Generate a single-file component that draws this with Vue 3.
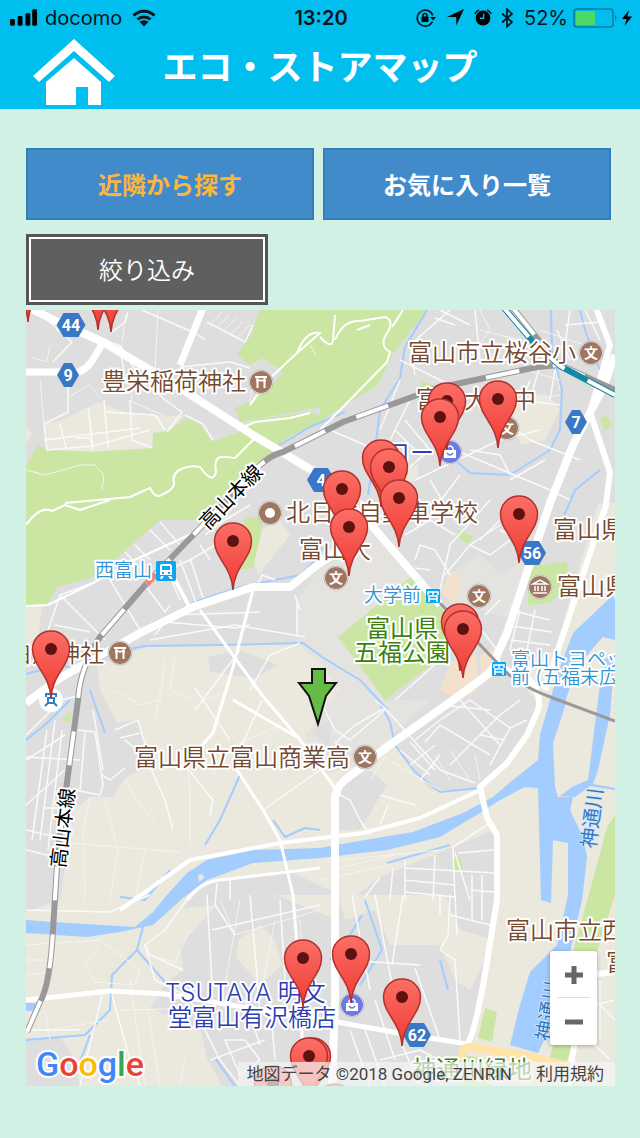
<template>
  <div class="page">
    <header class="header">
      <div class="status">
        <div class="status-side">
          <svg class="signal" viewBox="0 0 29 17" aria-hidden="true">
            <rect x="0" y="10" width="5" height="7" rx="1.5" />
            <rect x="8" y="7" width="5" height="10" rx="1.5" />
            <rect x="16" y="4" width="5" height="13" rx="1.5" />
            <rect x="23" y="0" width="5" height="17" rx="1.5" />
          </svg>
          <span>docomo</span>
          <svg class="wifi" viewBox="0 0 24 18" aria-hidden="true">
            <path d="M1.5 6.5 A15 15 0 0 1 22.5 6.5" />
            <path d="M5.5 10.5 A9.5 9.5 0 0 1 18.5 10.5" />
            <path class="solid" d="M12 17.5 L7.6 13 A6.2 6.2 0 0 1 16.4 13Z" />
          </svg>
        </div>
        <strong class="clock">13:20</strong>
        <div class="status-side right">
          <svg class="lock" viewBox="0 0 20 18" aria-hidden="true">
            <path class="line" d="M16.5 12.5 A8 8 0 1 1 16.8 6.5" />
            <path d="M14 8 H20 L17.2 11.5Z" />
            <rect x="5.5" y="7.5" width="7" height="5.5" rx="0.8" />
            <path class="line" d="M7 8 V6.5 A2 2 0 0 1 11 6.5 V8" />
          </svg>
          <svg class="arrow" viewBox="0 0 17 17" aria-hidden="true">
            <path d="M17 0 L9.3 16.5 V8 H0Z" />
          </svg>
          <svg class="alarm" viewBox="0 0 18 17" aria-hidden="true">
            <circle cx="9" cy="9" r="7.4" />
            <path d="M0.8 5 A9 9 0 0 1 5 0.9 M13 0.9 A9 9 0 0 1 17.2 5" class="line" />
            <path d="M9.6 4.8 V9.2 H5.8" class="hands" />
          </svg>
          <svg class="bluetooth" viewBox="0 0 12 20" aria-hidden="true">
            <path d="M1 5.5 L11 14 L6 18.8 V1.2 L11 6 L1 14.5" />
          </svg>
          <span>52%</span>
          <svg class="battery" viewBox="0 0 46 20" aria-hidden="true">
            <rect class="case" x="1" y="1" width="39" height="18" rx="3" />
            <rect class="level" x="3" y="3" width="19" height="14" rx="1" />
            <path class="cap" d="M42 7 Q45 10 42 13Z" />
          </svg>
          <svg class="bolt" viewBox="0 0 10 16" aria-hidden="true">
            <path d="M7 0 L0 9 H4.5 L2.6 16 L10 6.5 H5.4Z" />
          </svg>
        </div>
      </div>
      <div class="title-bar">
        <a href="#" class="home" aria-label="ホーム">
          <svg viewBox="0 0 82 66" aria-hidden="true">
            <path d="M41 0 L82 37 L76 43 L41 12 L6 43 L0 37Z" />
            <path d="M41 19 L68 43 V66 H55 V48 H43 V66 H13 V43Z" />
          </svg>
        </a>
        <h1>エコ・ストアマップ</h1>
      </div>
    </header>

    <main class="content">
      <div class="tabs">
        <button type="button" class="tab active">近隣から探す</button>
        <button type="button" class="tab">お気に入り一覧</button>
      </div>
      <button type="button" class="filter">絞り込み</button>

      <div class="map">
        <svg class="map-canvas" viewBox="26 310 589 776" role="img" aria-label="地図">
          <defs>
            <linearGradient id="pin-fill" x1="0" y1="0" x2="0" y2="1">
              <stop offset="0" stop-color="#fb6f66" />
              <stop offset="1" stop-color="#ef3a33" />
            </linearGradient>
            <path id="pin" d="M0 0 C-1.5 -24 -18.5 -32 -18.5 -49 A18.5 18 0 0 1 18.5 -49 C18.5 -32 1.5 -24 0 0Z" />
          </defs>

          <rect x="26" y="310" width="589" height="776" fill="#dedede" />
          <path v-for="(area, i) in areas" :key="'area' + i" :d="area.d" :class="area.kind" />
          <path v-for="(d, i) in streams" :key="'stream' + i" :d="d" class="stream" />
          <path v-for="(d, i) in lanes" :key="'lane' + i" :d="d" class="lane" />
          <path v-for="(d, i) in streets" :key="'street' + i" :d="d" class="street" />
          <path v-for="(road, i) in roads" :key="'road' + i" :d="road.d" class="road" :stroke-width="road.w" />
          <path class="toll" d="M462 1060 Q461 1047 469 1047 L520 1055 L570 1066" />

          <!-- railways -->
          <g v-for="(d, i) in rails" :key="'rail' + i">
            <path :d="d" class="rail" />
            <path :d="d" class="rail-dash" />
          </g>
          <path class="tram" d="M440 603 L507 673 Q525 688 553 698 L615 721" />
          <path class="bullet" d="M504 308 L533 342 L560 366 L615 395" />
          <path class="bullet-inner" d="M504 308 L533 342 L560 366 L615 395" />
          <path class="platform" d="M147 584 L156 574" />

          <g v-for="(b, i) in badges" :key="'badge' + i" :transform="`translate(${b.x} ${b.y})`">
            <path class="badge" :d="hexagon(b.w)" />
            <text class="badge-text" y="6">{{ b.text }}</text>
          </g>

          <text
            v-for="(l, i) in labels"
            :key="'label' + i"
            class="label"
            :class="l.kind"
            :x="l.x"
            :y="l.y"
            v-text="l.text"
          />
          <text
            v-for="(l, i) in tilted"
            :key="'tilted' + i"
            class="label small middle"
            :class="l.kind"
            :transform="`translate(${l.x} ${l.y}) rotate(${l.angle})`"
            y="7"
            v-text="l.text"
          />

          <g v-for="(p, i) in places" :key="'place' + i" :transform="`translate(${p.x} ${p.y})`">
            <circle class="place-ring" r="12" />
            <circle r="11" :fill="p.icon === 'bag' ? '#6c7be0' : '#9f7761'" />
            <text v-if="p.icon === 'school'" class="place-text" y="5">文</text>
            <path v-else-if="p.icon === 'torii'" class="place-line" d="M-6 -5 H6 M-5 -1.5 H5 M-3.5 -5 V6 M3.5 -5 V6" />
            <circle v-else-if="p.icon === 'dot'" r="5" fill="#fff" />
            <path v-else-if="p.icon === 'museum'" class="place-line thin" d="M-7 -3 L0 -7 L7 -3Z M-5 -1 V4 M-2 -1 V4 M2 -1 V4 M5 -1 V4 M-7 6 H7" />
            <g v-else>
              <path fill="#fff" d="M-6 -2 H6 V6 H-6Z" />
              <path class="place-line thin" d="M-3 -2 V-4 Q0 -8 3 -4 V-2" />
              <path fill="none" stroke="#6c7be0" stroke-width="1.5" d="M-3 1 Q0 5 3 1" />
            </g>
          </g>

          <!-- stations -->
          <g transform="translate(156 561)">
            <rect width="20" height="20" rx="2" fill="#0aa5f5" />
            <path fill="#fff" d="M6 3 H14 Q16 3 16 5 V14 H4 V5 Q4 3 6 3Z M5 15 H8 L6 18 H4Z M12 15 H15 L17 18 H14Z" />
            <path fill="#0aa5f5" d="M6 5 H14 V9 H6Z M6 11 H8 V13 H6Z M12 11 H14 V13 H12Z" />
          </g>
          <g v-for="(s, i) in tramStops" :key="'stop' + i" :transform="`translate(${s.x} ${s.y})`">
            <rect x="-7" y="-7" width="14" height="14" rx="1" fill="#0aa5f5" />
            <path fill="none" stroke="#fff" stroke-width="1.5" d="M-5 -1 V-4 H5 V-1 M0 -4 V-1 M-4 3 V0 H4 V3Z M-4 3 V6 M4 3 V6" />
          </g>
          <circle cx="51" cy="700" r="12" fill="#fff" />
          <path fill="none" stroke="#2f7fc9" stroke-width="2" d="M46 697 V694 H56 V697 M48 703 V698 H54 V703Z M45 706 L48 703 M57 706 L54 703" />

          <g v-for="(p, i) in pins" :key="'pin' + i" :transform="`translate(${p[0]} ${p[1]})`">
            <use href="#pin" class="pin" />
            <circle cy="-49" r="6" fill="#5d1210" />
          </g>
          <path class="here" d="M312 669 H325 V683 H336 L326 696 L318 724 L309 696 L299 683 H312Z" />
          <text class="google" x="36" y="1076"><tspan class="g-blue">G</tspan><tspan class="g-red">o</tspan><tspan class="g-yellow">o</tspan><tspan class="g-blue">g</tspan><tspan class="g-green">l</tspan><tspan class="g-red">e</tspan></text>
        </svg>

        <div class="zoom">
          <button type="button" aria-label="拡大" @click="zoom++">
            <svg viewBox="0 0 18 18"><path d="M0 9 H18 M9 0 V18" /></svg>
          </button>
          <button type="button" aria-label="縮小" @click="zoom--">
            <svg viewBox="0 0 18 18"><path d="M0 9 H18" /></svg>
          </button>
        </div>
        <div class="credit">
          <span>地図データ ©2018 Google, ZENRIN</span>
          <a href="#">利用規約</a>
        </div>
      </div>
    </main>
  </div>
</template>

<script setup>
import { ref } from 'vue'

const zoom = ref(14)

function hexagon(w) {
  const h = w / 2
  return `M${-h} 0 L${7 - h} -12 H${h - 7} L${h} 0 L${h - 7} 12 H${7 - h}Z`
}

const areas = [
  // farmland
  { kind: 'land', d: 'M100 690 L97 664 L147 647 L303 643 L340 660 L380 700 L400 752 L430 790 L480 790 L507 765 L530 735 L541 705 L507 670 L555 650 L598 503 H615 V1086 H460 L487 962 L500 900 L494 830 L453 847 L380 877 L350 900 L287 870 L207 883 L183 908 L217 905 L180 945 L183 970 L165 985 L150 1008 L200 1028 L207 1058 L222 1086 H80 L70 1050 L60 1038 L26 1038 V912 L60 900 L73 810 L90 797 L113 797 L123 780 L150 762 L137 720 L117 723Z' },
  { kind: 'land', d: 'M44 424 L62 420 L98 402 L125 412 L165 416 L185 415 L170 430 L153 433 L152 448 L93 452 L47 450Z M26 425 L32 433 L26 445Z M26 607 L42 606 L38 640 L50 660 L26 668Z' },
  { kind: 'land', d: 'M238 940 L260 925 L275 940 L282 965 L260 985 L236 957Z M275 895 H337 V920 L300 905Z M338 895 L445 895 L460 930 L495 940 L470 990 L455 980 L440 945 L390 945 L375 910 L345 920Z' },
  { kind: 'land', d: 'M262 530 L280 520 L290 535 L258 575 L254 560Z M510 402 L545 393 L560 410 L545 440 L520 445Z M398 465 L418 465 L418 480 L400 485Z' },
  { kind: 'campus', d: 'M297 600 L320 568 L338 560 L370 530 L413 577 L338 637 L385 700 H430 L360 765 L325 775 L305 735 L340 690 L322 665 L297 643Z M447 575 L480 555 L500 575 L525 560 L515 620 L450 602Z' },
  { kind: 'urban', d: 'M208 657 L240 650 L278 665 L255 678 L210 672Z M310 730 L330 722 L330 750Z M340 783 L370 770 L387 785 L360 830 H338Z M26 655 L95 675 L78 730 L26 800Z' },
  { kind: 'peach', d: 'M440 592 L452 571 L462 580 L454 605Z M440 690 L450 662 L476 655 L478 690 L460 700Z M480 655 L498 648 L496 675 L482 680Z' },
  // woods and parks
  { kind: 'green', d: 'M259 310 L252 333 L237 355 L250 365 L262 358 L283 372 L273 385 L250 402 L235 408 L240 422 L320 407 V422 L345 405 L378 385 L392 355 L427 310Z' },
  { kind: 'green', d: 'M26 467 L37 445 L47 450 L93 452 L153 448 L153 433 L167 432 L187 418 L200 424 L212 442 L237 433 L253 420 L310 412 L327 418 L287 438 L257 468 L213 505 L200 520 L160 520 L137 540 L107 567 L90 578 L57 587 L47 605 L26 607Z' },
  { kind: 'green', d: 'M245 518 L265 515 L253 568 L238 570Z M338 637 L413 575 L445 613 L450 650 L385 700Z M527 565 L567 562 L570 583 L550 603 L528 605Z M458 530 L473 536 L468 544 L458 538Z M422 381 L433 385 L430 391 L420 390Z M600 420 L604 414 L613 425 L605 431Z M61 720 L71 712 L70 722Z' },
  { kind: 'green', d: 'M607 827 L615 815 V895 L597 952 L573 952 L590 890Z M485 1008 L497 1012 L492 1042 L478 1038Z M553 1045 H572 L568 1062 L550 1058Z M463 1055 L483 1058 L493 1086 H460Z M453 858 L460 857 L463 872 L454 870Z' },
  // rivers
  { kind: 'water', d: 'M26 920 L53 922 L135 927 L153 912 L167 895 L187 873 L207 860 L253 850 L320 848 L353 842 L413 832 L463 813 L493 797 L513 780 L538 760 L540 735 L550 700 L560 667 L573 633 L615 593 V640 L603 637 L577 667 L567 700 L553 743 L555 787 L558 797 L573 797 L570 810 L583 837 L587 857 L582 900 L570 952 L563 990 L550 1028 L538 1053 L510 1045 L520 1005 L530 972 L557 945 L568 895 L568 843 L553 840 L551 903 L541 900 L538 788 L525 787 L500 800 L480 813 L440 837 L387 850 L320 858 L253 863 L207 880 L183 898 L153 925 L120 932 L87 937 L26 933Z' },
  { kind: 'water', d: 'M598 700 L603 660 L615 655 L610 715 L598 770 L593 784 L615 788 V790 L590 786 L575 797 L560 796 L572 787 L588 780Z M26 1003 H38 L33 1011 H26Z' },
  { kind: 'land', d: 'M577 667 L603 637 L611 645 L600 668 L598 700 L565 702Z M198 875 Q204 873 204 878 L199 882Z' },
]

const streams = [
  'M427 310 L405 347 L400 378 L380 410 L375 450 L368 495',
  'M257 468 L280 445 L310 427 L345 412',
  'M93 655 L150 625 L200 600 L240 587 L300 575 L316 560 L325 545',
  'M26 674 L60 665 L80 670 L115 652 L145 646 L220 645 L303 643 L322 657 L360 680 L388 710',
  'M378 700 L390 722 L395 745 L415 772 L440 792 L480 788',
  'M455 460 L470 473 L510 475 L550 450 L560 430 L562 390 L552 350 L551 310',
  'M560 525 L575 490 L600 470',
  'M387 863 L450 845',
  'M143 927 L137 950 L112 975 L110 1010 L85 1035 L26 1040 M137 950 L165 982 M90 1035 L75 1075',
]

const brooks = [
  'M120 897 L145 900 L170 870 M215 1058 L235 1086',
  'M330 960 L350 935 L362 915 M365 900 L382 950 L360 985 M440 960 L448 990',
  'M273 820 L285 837 L305 828 L320 830 M240 775 L220 820 L205 845',
  'M26 740 L45 725 L70 700 M90 690 L105 733 M600 370 L585 330 L580 310',
]
streams.push(...brooks)

const lanes = [
  'M40 380 L44 424 M33 358 L47 362 L50 345 M70 396 L90 385 L100 398 M122 342 L126 315 M155 370 L158 310 M210 325 L222 312 M217 327 L229 316 M224 330 L236 318 M231 334 L243 322 M238 337 L250 325 M130 380 L132 402 L165 416',
  'M26 470 L45 475 L80 465 L95 465 L104 475 L102 490 M316 355 L310 345 M250 404 L252 385 L260 370',
  'M187 768 L190 790 L190 845 M150 765 L158 740 M90 797 L83 830 L85 900 M105 800 L118 850 L110 900 M125 780 L140 805 L155 823 M70 843 L180 852 M145 850 L135 900 M212 775 L235 745 L280 725 M263 700 L285 720 L262 745',
  'M230 690 L205 700 M160 690 L155 720 M115 690 L140 705 L160 700 L165 660 M175 655 L170 690 L190 700',
  'M26 945 L100 940 L140 970 L135 985 L95 982 L85 965 L100 945 M45 1010 L50 1040 M47 1030 L110 1020 M26 975 L50 972 M26 960 L46 960 M130 980 L145 1086 M148 1010 L160 1086 M185 1058 L180 1086 M120 1010 L210 1008',
  'M220 900 L235 935 M240 900 L225 985 M275 920 L260 1000 M235 935 L320 910 M150 955 L175 962 L190 930 M300 920 L305 1000',
  'M320 862 L440 850 M330 870 L395 855 M320 880 L390 865 M370 780 L385 757 L405 770 L440 790',
  'M540 330 L600 350 M550 345 L560 390 M525 370 L560 380 M530 400 L560 395 M480 330 L520 340 M475 350 L490 330 L480 310',
  'M435 755 L450 780 M450 750 L470 780 M475 755 L480 780',
]

const streets = [
  'M45 318 L72 342 L53 362 M57 330 L120 345 M68 387 V412 L44 424 L47 450 L93 446 L150 430 M60 424 L66 448 M75 438 L90 438 L93 450 M88 408 L93 446 M104 400 L108 448 M130 400 L132 440 L152 448 M44 440 L140 428 M167 432 L182 412 L165 400 L135 370 L120 345 M105 412 L155 415 L165 430 M112 332 L125 322 L128 312 M142 310 L195 333',
  'M180 367 L230 362 L250 368 M185 415 L203 424 L213 440 M120 345 L125 380 M195 333 L205 340 M207 322 L245 342 L253 325',
  'M450 310 L410 345 L415 375 M435 318 L455 325 M440 310 L470 325 M400 360 L460 390 L530 440 L580 460 M490 390 L440 410 M330 430 L400 460 M415 480 L500 440 L540 430 M430 480 L445 505 M480 360 L475 310 M400 380 L380 430 M405 420 L430 450 L400 475 M395 430 L420 455',
  'M530 380 L523 400 L560 405 M540 365 L530 400 M555 370 L550 400 M455 450 L550 490 L570 500 M545 460 L510 480 M470 450 L500 455 L510 475 M570 310 L565 345 M585 310 L600 340 M565 325 L600 322 M410 400 L390 440 M557 330 L570 360',
  'M110 580 L140 630 M95 582 L60 595 L48 630 M135 545 L150 560 M125 552 L140 568 M115 560 L132 577 M150 530 L170 550 M160 522 L180 545 M60 595 L105 640 M55 625 L90 632 M145 585 L165 612 L170 605 M155 575 L190 560 L215 545 M165 565 L180 600 M180 560 L197 605 M190 558 L203 598 M200 545 L210 560 M205 535 L225 520 L250 505',
  'M155 635 L165 622 L235 628 L250 625 M150 640 L235 625 L305 637 M165 622 L172 615 L260 612 M297 600 V637 M255 590 L262 575 L275 580 M295 595 L300 610',
  'M187 768 L213 800 L210 815 M150 767 L165 800 L173 830 M263 810 L320 770 M195 688 L230 740 M195 710 L240 650 M262 700 L240 750 M300 643 L270 655 L250 690',
  'M26 760 L65 735 M26 735 L62 700 L80 695 M47 730 L32 840 M55 720 L40 840 M62 730 L48 850 M26 757 L80 760 M26 805 L65 770 M45 808 L70 808 M26 830 L60 838 M26 850 L60 858 M85 732 L80 790 M78 730 L95 732 L103 785 L100 795 L75 790 M93 710 L103 770 M102 775 L110 780 L125 768 M115 730 L138 720 L150 762 L125 740 M120 738 L140 733',
  'M320 700 L335 730 L350 740 L385 710 M335 743 L355 725 L385 708 L440 770 L475 783 M385 708 L375 700 M415 740 L440 720 L470 700 M425 742 L440 725 L490 755 M470 700 L510 728 L527 720 M510 728 L490 765 M450 765 L500 715 L520 700 M480 735 L505 740 M400 750 L430 775 M410 742 L435 770 M440 755 L420 780 M435 745 L410 765 M440 705 L490 710',
  'M380 877 L365 897 M393 868 L390 900 M405 860 V900 M405 868 L495 873 M405 880 L455 885 M405 892 L455 897 M435 855 L433 900 M453 847 L455 900 M455 853 L470 900 M458 853 L494 850 M472 875 V920 M482 875 V920 M470 890 L495 892 M453 847 L490 823',
  'M190 895 L165 930 L145 945 L150 955 L183 970 M207 895 L212 985 M217 883 L215 905 L235 935 M230 880 V900 M212 930 L320 905 M250 895 L260 1010 M280 900 L285 980 M345 960 L420 965 M352 895 L370 990 M375 895 L395 1000 M403 895 L392 965 M415 968 L440 1040 M350 1030 L370 1086 M365 1030 L385 1086 M375 1000 L395 1060 M440 895 V915 M440 950 L455 960 L460 1040 M450 915 L490 925 M450 895 L448 935 L440 950 M455 895 L457 935',
  'M102 995 L80 1086 M112 995 L130 1060 L140 1086 M145 945 L155 980 L175 990 L195 1000 M190 1000 L220 1060 L240 1086 M245 1000 L260 1045 M225 1040 L240 1075 L260 1060 L245 1040Z M26 1030 L80 1030 M210 1060 L265 1040 M270 1000 L275 1060 M26 910 L110 912 L150 895',
  'M400 520 L430 515 L460 475 M405 535 L430 520 L455 535 M415 560 L420 545 L435 550 L450 575 M440 590 L450 545 L490 500 M430 570 L415 568 M445 575 L470 545 L500 525 M470 545 L490 555 L510 540 M480 540 L500 520 M500 530 L530 545 M500 600 L485 615 M510 610 L550 620 M505 625 L552 632 M510 640 L550 645 M520 610 L510 650 M535 610 L527 650 M360 500 L400 530 M315 560 L340 545 M470 615 L497 650 M395 700 L440 660',
  'M370 835 L360 820 L350 800 L340 795 M415 805 L380 795 M380 825 L388 805 M500 745 L460 700',
  'M570 975 L615 1020 M575 1010 L615 1000 M600 980 V1040 M580 1030 L610 1060 M560 1086 L575 1040 M380 1060 L420 1050 L450 1065 M400 1040 L420 1086',
]

const roads = [
  { w: 8, d: 'M26 306 L60 323 L103 342 L180 388 L253 435 L320 475 L373 527 L440 605' },
  { w: 7, d: 'M203 308 L180 365 M26 372 H62 Q82 378 94 358 L103 342' },
  { w: 8, d: 'M26 703 L60 678 L140 633 L193 607 L253 587 H290 L320 563 L345 548' },
  { w: 8, d: 'M332 1086 L335 1000 V805 Q333 790 345 780 L387 747 L453 700 L487 675 Q496 668 497 655 L507 633 L550 503 L573 445 L603 388 L615 355' },
  { w: 6, d: 'M596 308 L610 345 L590 412 L610 472 L606 505 L558 650 L545 690' },
  { w: 6, d: 'M497 665 L530 680 Q542 695 538 710 L527 735 L507 763 L480 787 L487 818 L497 835 V900 L487 962 Q475 1035 467 1044' },
  { w: 5, d: 'M26 1000 L110 991 L165 994 L260 1010 L337 1022 L393 1032 L467 1044' },
  { w: 4, d: 'M175 580 L190 608 M120 910 L190 860 L280 843 L363 833 L420 818 L480 790' },
  { w: 3, d: 'M187 900 Q200 882 220 880 L320 868' },
  { w: 6, d: 'M568 1086 L575 1040 L590 975 L615 972' },
  // lanes over the hills and through the fields
  { w: 2, d: 'M65 503 L130 497 L150 488 Q156 500 163 494 Q173 490 174 484 C170 468 190 465 200 467 Q213 485 216 472 C212 450 228 458 235 458 L255 438' },
  { w: 2, d: 'M250 405 L268 380 L297 353 Q306 330 320 333 L297 353 M237 430 L255 422 L290 418 L310 413' },
  { w: 2, d: 'M320 337 Q332 350 333 340 L335 315 M335 340 Q343 320 360 321 L385 317 Q394 320 388 332 Q378 345 390 352 L387 362 L345 405 L320 430 M392 327 L403 310 M357 330 L370 325' },
  { w: 2, d: 'M26 525 Q40 505 52 511 L65 505 L80 510 L110 500 M26 606 L48 605 L95 582 L130 562 L200 530' },
  { w: 3, d: 'M200 610 L262 695 L300 740 L340 795 M253 590 L233 667 L213 733 L180 770 M237 770 L263 810 L280 840 L293 895 L300 985 L303 1060 M233 700 L297 737' },
]

const rails = [
  'M27 1032 L40 1002 Q50 985 53 930 L58 850 L78 700 Q80 668 100 637 L147 583 L200 528 L257 468 Q270 455 283 452 L343 422 L437 388 L537 367 L560 365 L615 390',
  'M513 308 L557 363',
]

const badges = [
  { x: 71, y: 325, w: 29, text: '44' },
  { x: 68, y: 375, w: 22, text: '9' },
  { x: 576, y: 422, w: 22, text: '7' },
  { x: 321, y: 480, w: 28, text: '4' },
  { x: 532, y: 553, w: 28, text: '56' },
  { x: 417, y: 1035, w: 28, text: '62' },
]

const labels = [
  { x: 102, y: 390, text: '豊栄稲荷神社' },
  { x: 408, y: 361, text: '富山市立桜谷小' },
  { x: 416, y: 408, text: '富山大附中' },
  { x: 286, y: 521, text: '北日本自動車学校' },
  { x: 299, y: 558, text: '富山大' },
  { x: 553, y: 538, text: '富山県' },
  { x: 557, y: 595, text: '富山県' },
  { x: 8, y: 662, text: '白鳥神社' },
  { x: 134, y: 766, text: '富山県立富山商業高' },
  { x: 506, y: 939, text: '富山市立西' },
  { x: 606, y: 971, text: '富' },
  { x: 362, y: 461, text: 'バロー', kind: 'shop' },
  { x: 165, y: 1001, text: 'TSUTAYA 明文', kind: 'shop' },
  { x: 168, y: 1026, text: '堂富山有沢橋店', kind: 'shop' },
  { x: 366, y: 637, text: '富山県', kind: 'park' },
  { x: 354, y: 661, text: '五福公園', kind: 'park' },
  { x: 412, y: 1078, text: '神通川緑地', kind: 'park' },
  { x: 95, y: 577, text: '西富山', kind: 'station small' },
  { x: 364, y: 602, text: '大学前', kind: 'station small' },
  { x: 511, y: 666, text: '富山トヨペット', kind: 'station small' },
  { x: 511, y: 684, text: '前 (五福末広', kind: 'station small' },
]

const tilted = [
  { x: 231, y: 497, angle: -46, text: '高山本線', kind: 'line' },
  { x: 63, y: 828, angle: -83, text: '高山本線', kind: 'line' },
  { x: 592, y: 818, angle: -83, text: '神通川', kind: 'river' },
  { x: 548, y: 1011, angle: -80, text: '神通川', kind: 'river' },
]

const places = [
  { x: 261, y: 382, icon: 'torii' },
  { x: 120, y: 653, icon: 'torii' },
  { x: 591, y: 353, icon: 'school' },
  { x: 507, y: 428, icon: 'school' },
  { x: 336, y: 578, icon: 'school' },
  { x: 479, y: 596, icon: 'school' },
  { x: 365, y: 757, icon: 'school' },
  { x: 270, y: 513, icon: 'dot' },
  { x: 540, y: 587, icon: 'museum' },
  { x: 450, y: 452, icon: 'bag' },
  { x: 352, y: 1005, icon: 'bag' },
]

const tramStops = [
  { x: 433, y: 596 },
  { x: 499, y: 669 },
]

// tip of each pin, drawn back to front
const pins = [
  [28, 322], [98, 330], [111, 332],
  [447, 450], [498, 448], [440, 466],
  [381, 507], [389, 516], [342, 538], [399, 547], [519, 563], [349, 576],
  [233, 590], [460, 671], [463, 678], [51, 698],
  [351, 1003], [303, 1007], [402, 1046],
  [273, 1133], [335, 1151], [312, 1105], [309, 1105],
]
</script>

<style>
body {
  margin: 0;
  background: #d2f1e5;
}
</style>

<style scoped>
.page {
  min-height: 100vh;
  box-sizing: border-box;
  background: #d2f1e5;
  font-family: Inter, "Noto Sans CJK JP", sans-serif;
}

.header {
  background: #00bfee;
}

.status {
  display: grid;
  grid-template-columns: 1fr auto 1fr;
  align-items: center;
  height: 35px;
  padding: 0 8px 0 10px;
  font-size: 20px;
  line-height: 34px;
  color: #06151b;
}

.status-side {
  display: flex;
  align-items: center;
  gap: 7px;
}

.status-side.right {
  justify-content: flex-end;
}

.clock {
  font-size: 20px;
  font-weight: 600;
}

.signal {
  width: 28px;
  height: 17px;
}

.wifi {
  width: 24px;
  height: 18px;
  margin-left: 3px;
  fill: none;
  stroke: #06151b;
  stroke-width: 3;
}

.wifi .solid {
  fill: #06151b;
  stroke: none;
}

.lock {
  width: 20px;
  height: 18px;
}

.lock .line,
.alarm .line {
  fill: none;
  stroke: #06151b;
  stroke-width: 1.6;
}

.arrow {
  width: 17px;
  height: 17px;
  margin-left: 4px;
}

.alarm {
  width: 18px;
  height: 17px;
  margin-left: 3px;
}

.alarm .hands {
  fill: none;
  stroke: #00bfee;
  stroke-width: 1.4;
}

.bluetooth {
  width: 12px;
  height: 20px;
  margin: 0 4px 0 2px;
  fill: none;
  stroke: #06151b;
  stroke-width: 1.7;
}

.battery {
  width: 46px;
  height: 20px;
  margin-left: -2px;
}

.battery .case {
  fill: none;
  stroke: #087d9c;
  stroke-width: 1.5;
}

.battery .level {
  fill: #4cd964;
}

.battery .cap {
  fill: #087d9c;
}

.bolt {
  width: 10px;
  height: 16px;
  margin-left: -4px;
}

.title-bar {
  display: grid;
  grid-template-columns: 82px 1fr 82px;
  align-items: center;
  height: 74px;
  padding: 0 33px;
  box-sizing: border-box;
}

.home svg {
  display: block;
  width: 82px;
  height: 66px;
  fill: #fff;
}

.title-bar h1 {
  margin: 0 0 10px;
  font-size: 35px;
  font-weight: 700;
  line-height: 40px;
  text-align: center;
  white-space: nowrap;
  color: #fff;
}

.content {
  padding: 39px 25px 52px 26px;
}

.tabs {
  display: grid;
  grid-template-columns: 1fr 1fr;
  gap: 9px;
  margin: 0 4px 14px 0;
}

.tab,
.filter {
  padding: 0 0 2px;
  font-family: inherit;
  font-size: 24px;
  cursor: pointer;
}

.tab {
  height: 72px;
  border: 2px solid #357ebd;
  background: #428bca;
  color: #fff;
  font-weight: 700;
}

.tab.active {
  color: #fbb540;
}

.filter {
  display: block;
  width: 242px;
  height: 71px;
  margin-bottom: 5px;
  border: 3px solid #555;
  outline: 2px solid #fff;
  outline-offset: -5px;
  background: #5f5f5f;
  color: #fff;
  font-weight: 350;
}

.map {
  position: relative;
  overflow: hidden;
}

.map-canvas {
  display: block;
  width: 100%;
  height: auto;
}

.land { fill: #ebe8dd; }
.campus { fill: #e5e3df; }
.urban { fill: #dedede; }
.peach { fill: #f3e1ce; }
.green { fill: #cbe6a3; }
.water { fill: #a3ccff; }

.stream,
.lane,
.street,
.road,
.toll,
.rail,
.rail-dash,
.tram,
.bullet,
.bullet-inner,
.platform {
  fill: none;
  stroke: #fff;
  stroke-linejoin: round;
}

.stream { stroke: #a3ccff; stroke-width: 2; }
.lane { stroke: #f5f4f0; stroke-width: 1; }
.street { stroke: #fafafa; stroke-width: 1.5; }
.toll { stroke: #ffe4a5; stroke-width: 8; }
.rail { stroke: #999; stroke-width: 6; }
.rail-dash { stroke-width: 4; stroke-dasharray: 34; }
.tram { stroke: #999; stroke-width: 3; }
.bullet { stroke: #138aa5; stroke-width: 6; }
.bullet-inner { stroke-width: 4; stroke-dasharray: 38 8 40 26; }
.platform { stroke: #f0877f; stroke-width: 6; }

.badge {
  fill: #3878c7;
}

.badge-text {
  fill: #fff;
  font: 700 16px Roboto, sans-serif;
  text-anchor: middle;
}

.label {
  fill: #75492e;
  stroke: #fff;
  stroke-width: 4;
  stroke-linejoin: round;
  paint-order: stroke;
  font: 350 24px Inter, "Noto Sans CJK JP", sans-serif;
}

.label.small { font-size: 19px; }
.label.middle { font-size: 20px; text-anchor: middle; }
.label.shop { fill: #2d3cb5; }
.label.park { fill: #3a810d; font-weight: 400; }
.label.station { fill: #3394d4; }
.label.line { fill: #000; font-weight: 400; }
.label.river { fill: #2d74bd; stroke: #cfe4ff; stroke-width: 2; }

.place-ring {
  fill: #fff;
  stroke: #bbb;
  stroke-width: 1;
}

.place-text {
  fill: #fff;
  font: 700 14px "Noto Sans CJK JP", sans-serif;
  text-anchor: middle;
}

.place-line {
  fill: none;
  stroke: #fff;
  stroke-width: 2;
}

.place-line.thin {
  stroke-width: 1.5;
}

.pin {
  fill: url(#pin-fill);
  stroke: #b3302c;
  stroke-width: 1.5;
}

.here {
  fill: #64bc46;
  stroke: #111;
  stroke-width: 2;
}

.google {
  font: 500 34px Roboto, sans-serif;
  stroke: #fff;
  stroke-width: 4;
  paint-order: stroke;
}

.g-blue { fill: #4285f4; }
.g-red { fill: #ea4335; }
.g-yellow { fill: #fbbc05; }
.g-green { fill: #34a853; }

.zoom {
  position: absolute;
  right: 18px;
  bottom: 41px;
  display: flex;
  flex-direction: column;
  width: 47px;
  border-radius: 3px;
  background: #fff;
  box-shadow: 0 1px 4px rgba(0, 0, 0, 0.3);
}

.zoom button {
  display: grid;
  place-items: center;
  height: 47px;
  padding: 0;
  border: 0;
  background: none;
  cursor: pointer;
}

.zoom button + button::before {
  content: "";
  position: absolute;
  top: 46px;
  left: 7px;
  right: 7px;
  border-top: 1px solid #ddd;
}

.zoom svg {
  width: 18px;
  height: 18px;
  stroke: #666;
  stroke-width: 5;
}

.credit {
  position: absolute;
  right: 0;
  bottom: 0;
  display: flex;
  gap: 24px;
  padding: 0 11px 0 9px;
  background: rgba(245, 245, 245, 0.7);
  font: 17px/24px Roboto, "Noto Sans CJK JP", sans-serif;
  white-space: nowrap;
  color: #444;
}

.credit a {
  color: #444;
  text-decoration: none;
}
</style>
